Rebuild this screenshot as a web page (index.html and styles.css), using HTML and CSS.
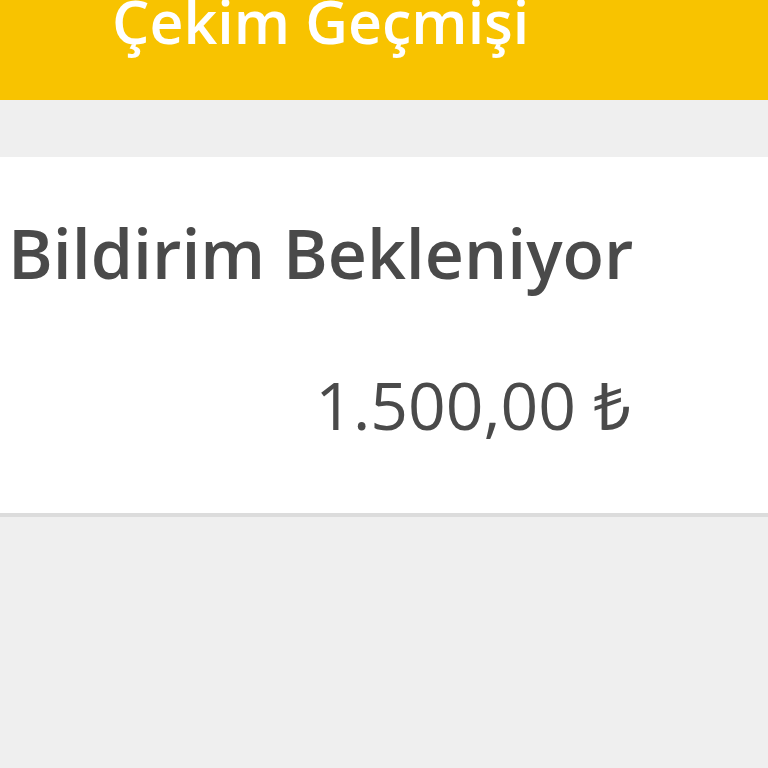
FILE: index.html
```html
<!DOCTYPE html>
<html lang="tr">
<head>
    <meta charset="UTF-8">
    <meta name="viewport" content="width=device-width, initial-scale=1.0">
    <title>Çekim Geçmişi</title>
    <link rel="stylesheet" href="styles.css">
</head>
<body>
    <header class="topbar">
        <h1>Çekim Geçmişi</h1>
    </header>

    <div class="history-list">
        <div class="history-item">
            <div class="history-status">Bildirim Bekleniyor</div>
            <div class="history-amount">1.500,00 ₺</div>
        </div>
    </div>
</body>
</html>
```

FILE: styles.css
```css
body {
    font-family: 'Open Sans', 'Noto Sans', sans-serif;
    margin: 0;
    padding: 0;
    background-color: #efefef;
    color: #4a4a4a;
}
.topbar {
    background-color: #f8c300;
    height: 100px;
    overflow: hidden;
}
.topbar h1 {
    margin: -8px 0 0 0;
    padding-left: 112px;
    font-size: 59px;
    line-height: 1;
    font-weight: 600;
    color: #fff;
}
.history-list {
    margin-top: 57px;
}
.history-item {
    background-color: #fff;
    border-bottom: 4px solid #dcdcdc;
    padding: 62px 137px 76px 8px;
}
.history-status {
    font-size: 68px;
    line-height: 1;
    font-weight: 600;
    white-space: nowrap;
}
.history-amount {
    margin-top: 84px;
    font-size: 66px;
    line-height: 1;
    text-align: right;
}
```
